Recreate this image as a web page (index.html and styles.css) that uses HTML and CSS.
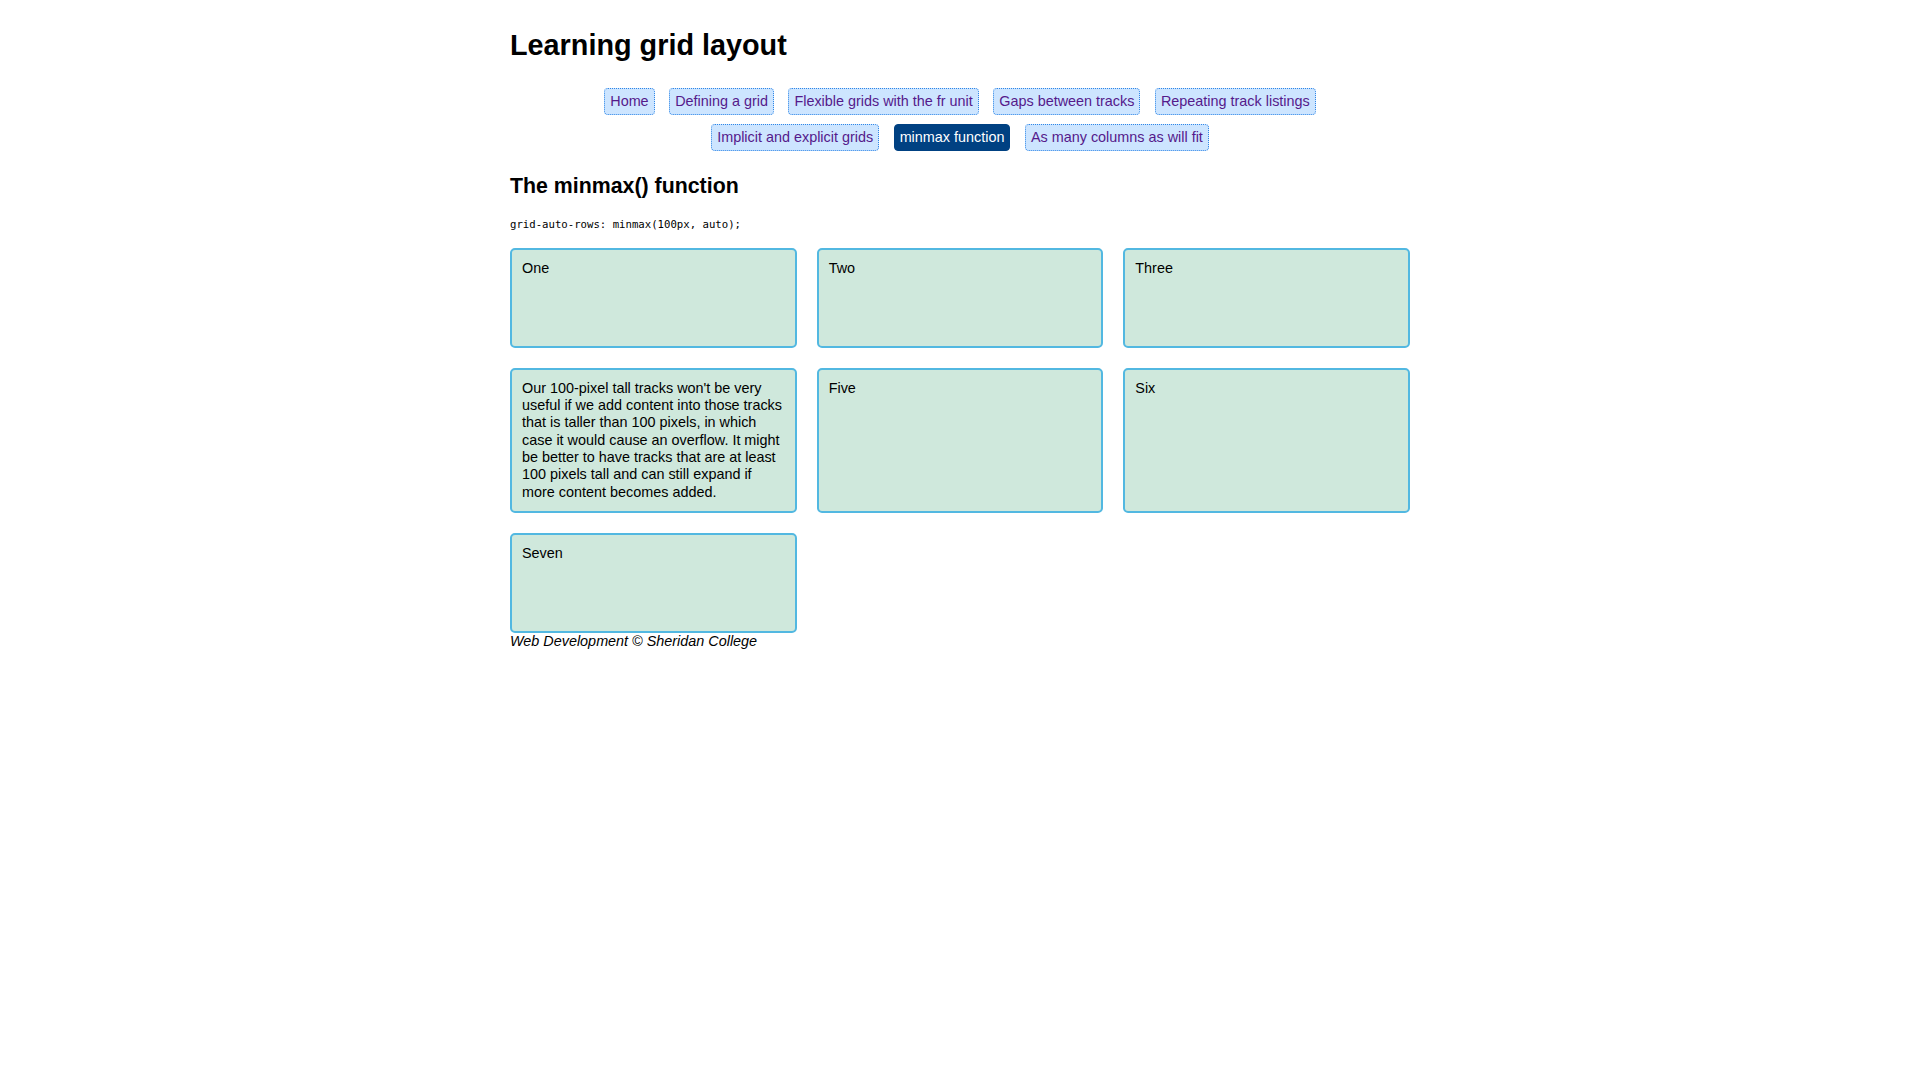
FILE: index.html
```html
<!DOCTYPE html>
<html lang="en">
<head>
<meta charset="utf-8">
<title>Learning grid layout</title>
<link rel="stylesheet" href="styles.css">
</head>
<body>
<div class="page">
  <h1 class="title">Learning grid layout</h1>
  <nav class="nav">
    <a class="nav-link" href="#">Home</a>
    <a class="nav-link" href="#">Defining a grid</a>
    <a class="nav-link" href="#">Flexible grids with the fr unit</a>
    <a class="nav-link" href="#">Gaps between tracks</a>
    <a class="nav-link" href="#">Repeating track listings</a>
    <a class="nav-link" href="#">Implicit and explicit grids</a>
    <a class="nav-link active" href="#">minmax function</a>
    <a class="nav-link" href="#">As many columns as will fit</a>
  </nav>
  <h2 class="subtitle">The minmax() function</h2>
  <p class="code-line"><code class="code">grid-auto-rows: minmax(100px, auto);</code></p>
  <div class="grid">
    <div class="cell">One</div>
    <div class="cell">Two</div>
    <div class="cell">Three</div>
    <div class="cell">Our 100-pixel tall tracks won't be very useful if we add content into those tracks that is taller than 100 pixels, in which case it would cause an overflow. It might be better to have tracks that are at least 100 pixels tall and can still expand if more content becomes added.</div>
    <div class="cell">Five</div>
    <div class="cell">Six</div>
    <div class="cell">Seven</div>
  </div>
  <footer class="footer">Web Development &copy; Sheridan College</footer>
</div>
</body>
</html>
```
FILE: styles.css
```css
html, body {
  margin: 0;
  padding: 0;
  background: #ffffff;
}

body {
  font-family: "Liberation Sans", Arial, sans-serif;
  font-size: 14.4px;
  line-height: 1.2;
  color: #000;
}

.page {
  width: 900px;
  margin: 0 auto;
}

.title {
  font-size: 28.8px;
  line-height: 33px;
  font-weight: bold;
  margin: 29px 0 0;
}

.nav {
  margin-top: 25.5px;
  padding: 0 50px;
  display: flex;
  flex-wrap: wrap;
  justify-content: center;
  column-gap: 14.5px;
  row-gap: 9px;
}

.nav-link {
  display: block;
  font-size: 14.4px;
  line-height: 17.28px;
  padding: 4px 5px;
  border: 1px dotted #2f86e6;
  border-radius: 4px;
  background: #cde5ff;
  color: #551a8b;
  text-decoration: none;
}

.nav-link.active {
  background: #004182;
  border: 1px solid #004182;
  color: #ffffff;
}

.subtitle {
  font-size: 21.33px;
  line-height: 24.5px;
  font-weight: bold;
  margin: 23px 0 0;
}

.code-line {
  margin: 16.5px 0 14.5px;
  line-height: 17.28px;
}

.code {
  font-family: "DejaVu Sans Mono", "Liberation Mono", monospace;
  font-size: 10.67px;
  color: #000;
}

.grid {
  display: grid;
  grid-template-columns: repeat(3, 1fr);
  grid-auto-rows: minmax(100px, auto);
  gap: 20px;
}

.cell {
  box-sizing: border-box;
  border: 2px solid #52b8e1;
  border-radius: 5px;
  background: #cfe8dc;
  padding: 10px;
  font-size: 14.4px;
  line-height: 17.28px;
}

.footer {
  font-style: italic;
  font-size: 14.4px;
  line-height: 17.28px;
}
```
